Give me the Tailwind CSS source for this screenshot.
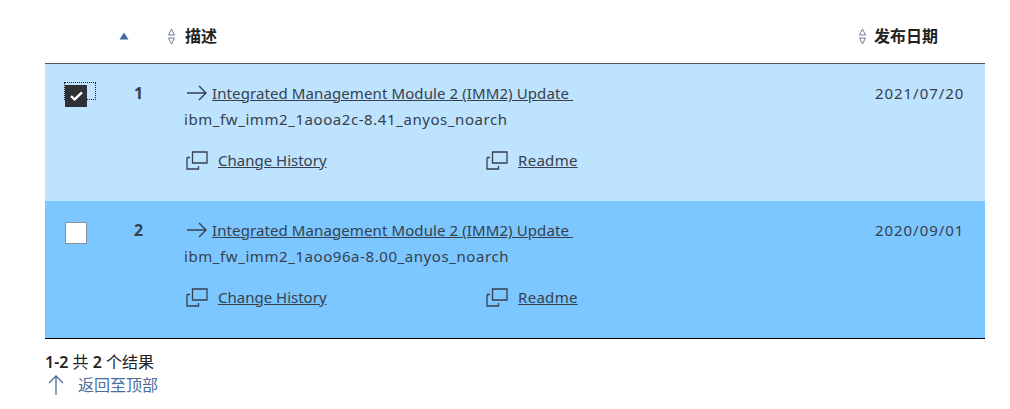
<!DOCTYPE html>
<html lang="zh">
<head>
 <meta charset="UTF-8">
 <title>Fix list</title>
 <script src="https://cdn.jsdelivr.net/npm/@tailwindcss/browser@4"></script>
</head>
<body class="bg-white text-[#37404c] text-[15px] font-['Noto_Sans','Noto_Sans_CJK_SC',sans-serif] overflow-hidden">
 <div class="w-[1010px] h-[409px] pl-[45px] pr-[25px]">
   <!-- header -->
   <div class="h-[64px] pt-[9px] border-b border-[#4f5660] grid grid-cols-[70px_52px_688px_130px] items-center">
     <div></div>
     <div class="pl-[4px] pb-[1px]">
       <svg width="10" height="8" viewBox="0 0 10 8"><path d="M5 .5 9.500 7.500H.5z" fill="#3f6aa3"/></svg>
     </div>
     <div class="flex items-center gap-[9px]">
       <svg width="9" height="17" viewBox="0 0 9 17" fill="none" stroke="#6f7d96"><path d="M4.500 1 7.500 7H1.500zM4.500 16 7.500 10H1.500z"/></svg>
       <span class="text-[16px] font-bold text-[#222]">描述</span>
     </div>
     <div class="flex items-center gap-[7px] ml-[3px]">
       <svg width="9" height="17" viewBox="0 0 9 17" fill="none" stroke="#6f7d96"><path d="M4.500 1 7.500 7H1.500zM4.500 16 7.500 10H1.500z"/></svg>
       <span class="text-[16px] font-bold text-[#222]">发布日期</span>
     </div>
   </div>

   <!-- row 1 -->
   <div class="h-[137px] bg-[#bee3ff] grid grid-cols-[70px_69px_691px_110px]">
     <div class="pt-[18px] pl-[19px]">
       <div class="relative w-[32px] h-[18px] border border-dotted border-[#222]">
         <div class="absolute top-[2px] left-0 w-[22px] h-[22px] bg-[#2f3136] flex items-center justify-center">
           <svg width="13" height="10" viewBox="0 0 13 10" fill="none" stroke="#fff" stroke-width="2.400"><path d="M1 5.200 4.600 8.400 12 1.400"/></svg>
         </div>
       </div>
     </div>
     <div class="pt-[19px] pl-[19px] text-[16px] leading-[20px] font-bold">1</div>
     <div class="pt-[17px]">
       <div class="h-[24px] flex items-center">
         <svg class="ml-[3px] mr-[5px]" width="20" height="16" viewBox="0 0 20 16" fill="none" stroke="#37404c" stroke-width="1.400"><path d="M0 8H19M12 1l7 7-7 7"/></svg>
         <a class="underline tracking-[0.1px] whitespace-pre">Integrated Management Module 2 (IMM2) Update </a>
       </div>
       <div class="h-[28px] leading-[28px] tracking-[0.57px]">ibm_fw_imm2_1aooa2c-8.41_anyos_noarch</div>
       <div class="mt-[15px] flex items-center h-[24px]">
         <div class="w-[300px] flex items-center gap-[10px]">
           <svg class="ml-[2px]" width="22" height="19" viewBox="0 0 22 19" fill="none" stroke="#37404c" stroke-width="1.300"><path d="M6.500 1h14.500v11H6.500zM1 6.500h3M1 6.500v11.500h11.500v-3"/></svg>
           <a class="underline">Change History</a>
         </div>
         <div class="flex items-center gap-[10px]">
           <svg class="ml-[2px]" width="22" height="19" viewBox="0 0 22 19" fill="none" stroke="#37404c" stroke-width="1.300"><path d="M6.500 1h14.500v11H6.500zM1 6.500h3M1 6.500v11.500h11.500v-3"/></svg>
           <a class="underline tracking-[0.3px]">Readme</a>
         </div>
       </div>
     </div>
     <div class="pt-[17px] h-[41px] leading-[24px] tracking-[0.95px]">2021/07/20</div>
   </div>

   <!-- row 2 -->
   <div class="h-[138px] bg-[#7cc7ff] border-b border-black grid grid-cols-[70px_69px_691px_110px]">
     <div class="pt-[21px] pl-[20px]">
       <div class="w-[22px] h-[22px] bg-white border border-[#8a8f99]"></div>
     </div>
     <div class="pt-[19px] pl-[19px] text-[16px] leading-[20px] font-bold">2</div>
     <div class="pt-[17px]">
       <div class="h-[24px] flex items-center">
         <svg class="ml-[3px] mr-[5px]" width="20" height="16" viewBox="0 0 20 16" fill="none" stroke="#37404c" stroke-width="1.400"><path d="M0 8H19M12 1l7 7-7 7"/></svg>
         <a class="underline tracking-[0.1px] whitespace-pre">Integrated Management Module 2 (IMM2) Update </a>
       </div>
       <div class="h-[28px] leading-[28px] tracking-[0.57px]">ibm_fw_imm2_1aoo96a-8.00_anyos_noarch</div>
       <div class="mt-[15px] flex items-center h-[24px]">
         <div class="w-[300px] flex items-center gap-[10px]">
           <svg class="ml-[2px]" width="22" height="19" viewBox="0 0 22 19" fill="none" stroke="#37404c" stroke-width="1.300"><path d="M6.500 1h14.500v11H6.500zM1 6.500h3M1 6.500v11.500h11.500v-3"/></svg>
           <a class="underline">Change History</a>
         </div>
         <div class="flex items-center gap-[10px]">
           <svg class="ml-[2px]" width="22" height="19" viewBox="0 0 22 19" fill="none" stroke="#37404c" stroke-width="1.300"><path d="M6.500 1h14.500v11H6.500zM1 6.500h3M1 6.500v11.500h11.500v-3"/></svg>
           <a class="underline tracking-[0.3px]">Readme</a>
         </div>
       </div>
     </div>
     <div class="pt-[17px] h-[41px] leading-[24px] tracking-[0.95px]">2020/09/01</div>
   </div>

   <!-- footer -->
   <div class="mt-[12px] h-[22px] leading-[22px] text-[16px] text-[#222]"><span class="font-semibold">1-2</span> 共 <span class="font-semibold">2</span> 个结果</div>
   <a class="h-[24px] flex items-center text-[#4a6d9c] text-[16px]">
     <svg class="ml-[3px] mr-[14px]" width="16" height="20" viewBox="0 0 16 20" fill="none" stroke="#4a6d9c" stroke-width="1.300"><path d="M8 20V1M1 8l7-7 7 7"/></svg>
     返回至顶部
   </a>
 </div>
</body>
</html>
